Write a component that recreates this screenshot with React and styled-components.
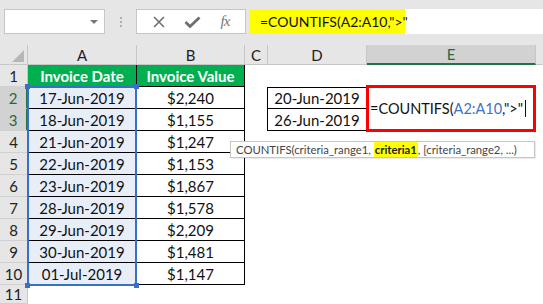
import styled, { createGlobalStyle, css } from "styled-components";

const GlobalStyle = createGlobalStyle`
  html, body {
    margin: 0;
    padding: 0;
    background: #fff;
  }
  body {
    font-family: Lato, "Liberation Sans", sans-serif;
  }
`;

const Page = styled.div`
  width: 543px;
  height: 304px;
  overflow: hidden;
  display: flex;
  flex-direction: column;
  background: #fff;
`;

const FormulaBar = styled.div`
  height: 45px;
  box-sizing: border-box;
  padding: 9px 0 0 4px;
  background: #e6e6e6;
  display: flex;
  align-items: flex-start;
`;

const NameBox = styled.div`
  width: 101px;
  height: 25px;
  box-sizing: border-box;
  background: #fff;
  border: 1px solid #c6c6c6;
  display: flex;
  align-items: center;
  justify-content: flex-end;
  padding-right: 6px;
`;

const DropArrow = styled.span`
  width: 0;
  height: 0;
  border-left: 4px solid transparent;
  border-right: 4px solid transparent;
  border-top: 4px solid #777;
`;

const Grip = styled.div`
  width: 31px;
  height: 25px;
  display: flex;
  flex-direction: column;
  align-items: center;
  justify-content: center;
  gap: 2px;
  span {
    width: 2px;
    height: 2px;
    background: #b0b0b0;
  }
`;

const ButtonBox = styled.div`
  width: 110px;
  height: 25px;
  box-sizing: border-box;
  background: #fff;
  border: 1px solid #c6c6c6;
  display: flex;
  align-items: center;
  justify-content: space-around;
  padding: 0 6px;
`;

const Fx = styled.span`
  font-family: "Liberation Serif", serif;
  font-style: italic;
  font-size: 15px;
  color: #777;
  letter-spacing: -1px;
`;

const FormulaInput = styled.div`
  flex: 1;
  height: 25px;
  margin-left: 3px;
  background: #fff;
  display: flex;
  align-items: center;
`;

const Highlight = styled.div`
  height: 25px;
  width: 156px;
  box-sizing: border-box;
  background: #ffff00;
  display: flex;
  align-items: center;
  padding-left: 11px;
  font-size: 14px;
  color: #111;
  white-space: nowrap;
`;

const Sheet = styled.div`
  position: relative;
  display: grid;
  grid-template-columns: 28px 109px 108px 23px 99px 169px 7px;
  grid-template-rows: 20px repeat(10, 22px) 19px;
  font-size: 15px;
  color: #111;
`;

const place = css`
  grid-column: ${(p) => p.$col};
  grid-row: ${(p) => p.$row};
`;

const Corner = styled.div`
  ${place}
  background: #e6e6e6;
  border-right: 1px solid #c6c6c6;
  border-bottom: 1px solid #c6c6c6;
  box-sizing: border-box;
  display: flex;
  align-items: flex-end;
  justify-content: flex-end;
  padding: 0 3px 2px 0;
  &::after {
    content: "";
    width: 0;
    height: 0;
    border-left: 12px solid transparent;
    border-bottom: 12px solid #b7b7b7;
  }
`;

const ColHeader = styled.div`
  ${place}
  box-sizing: border-box;
  background: ${(p) => (p.$selected ? "#d2d2d2" : "#e6e6e6")};
  color: ${(p) => (p.$selected ? "#1e6b41" : "#222")};
  border-right: 1px solid ${(p) => (p.$last ? "transparent" : "#c6c6c6")};
  border-bottom: ${(p) => (p.$selected ? "2px solid #217346" : "1px solid #c6c6c6")};
  display: flex;
  align-items: center;
  justify-content: center;
  font-size: 15px;
`;

const RowHeader = styled.div`
  ${place}
  box-sizing: border-box;
  background: ${(p) => (p.$selected ? "#d2d2d2" : "#e6e6e6")};
  color: ${(p) => (p.$selected ? "#1e6b41" : "#222")};
  border-right: ${(p) => (p.$selected ? "2px solid #217346" : "1px solid #c6c6c6")};
  border-bottom: 1px solid #d0d0d0;
  display: flex;
  align-items: center;
  justify-content: center;
  font-size: 15px;
`;

const Cell = styled.div`
  ${place}
  box-sizing: border-box;
  display: flex;
  align-items: center;
  justify-content: center;
  white-space: nowrap;
`;

const HeadCell = styled(Cell)`
  background: #00b050;
  color: #fff;
  font-weight: 700;
  border-right: 1px solid #000;
  border-bottom: 1px solid #000;
`;

const DataCell = styled(Cell)`
  background: ${(p) => (p.$picked ? "#e8eef8" : "#fff")};
  border-right: 1px solid #000;
  border-bottom: 1px solid #000;
`;

const BoxCell = styled(Cell)`
  border: 1px solid #000;
  border-top-width: ${(p) => (p.$first ? "1px" : "0")};
  margin-left: -1px;
`;

const FormulaCell = styled(Cell)`
  justify-content: flex-start;
  margin: -2px 0 -1px -1px;
  border: 3px solid #ff0000;
  padding-left: 1px;
  position: relative;
  z-index: 3;
  font-size: 14.5px;
`;

const Ref = styled.span`
  color: #3f72c4;
`;

const Caret = styled.span`
  display: inline-block;
  width: 1px;
  height: 17px;
  margin-left: 2px;
  background: #111;
`;

const RangeBox = styled.div`
  ${place}
  margin: -1px 0 -1px -1px;
  border: 2px solid #3a6fc8;
  position: relative;
  z-index: 2;
  pointer-events: none;
`;

const Handle = styled.span`
  position: absolute;
  width: 5px;
  height: 5px;
  background: #3a6fc8;
  top: ${(p) => (p.$bottom ? "auto" : "-4px")};
  bottom: ${(p) => (p.$bottom ? "-4px" : "auto")};
  left: ${(p) => (p.$right ? "auto" : "-4px")};
  right: ${(p) => (p.$right ? "-4px" : "auto")};
`;

const Tooltip = styled.div`
  position: absolute;
  left: 230px;
  top: 96px;
  width: 305px;
  height: 17px;
  box-sizing: border-box;
  background: #fff;
  border: 1px solid #c6c6c6;
  box-shadow: 1px 1px 1px rgba(0, 0, 0, 0.08);
  display: flex;
  align-items: stretch;
  padding-left: 5px;
  font-size: 11.3px;
  line-height: 15px;
  color: #444;
  white-space: nowrap;
  z-index: 4;
`;

const ArgMark = styled.b`
  background: #ffff00;
  color: #222;
  padding: 0 1px;
`;

const rows = [
  ["17-Jun-2019", "$2,240"],
  ["18-Jun-2019", "$1,155"],
  ["21-Jun-2019", "$1,247"],
  ["22-Jun-2019", "$1,153"],
  ["23-Jun-2019", "$1,867"],
  ["28-Jun-2019", "$1,578"],
  ["29-Jun-2019", "$2,209"],
  ["30-Jun-2019", "$1,481"],
  ["01-Jul-2019", "$1,147"],
];

const criteria = ["20-Jun-2019", "26-Jun-2019"];

const columns = ["A", "B", "C", "D", "E", ""];

const XIcon = () => (
  <svg width="12" height="12" viewBox="0 0 12 12">
    <path d="M1 1 L11 11 M11 1 L1 11" stroke="#6f6f6f" strokeWidth="1.6" fill="none" />
  </svg>
);

const CheckIcon = () => (
  <svg width="17" height="12" viewBox="0 0 17 12">
    <path d="M1.5 6 L6 10.5 L15.5 1.5" stroke="#6f6f6f" strokeWidth="2.8" fill="none" />
  </svg>
);

const App = () => {
  return (
    <>
      <GlobalStyle />
      <Page>
        <FormulaBar>
          <NameBox>
            <DropArrow />
          </NameBox>
          <Grip>
            <span />
            <span />
            <span />
          </Grip>
          <ButtonBox>
            <XIcon />
            <CheckIcon />
            <Fx>fx</Fx>
          </ButtonBox>
          <FormulaInput>
            <Highlight>=COUNTIFS(A2:A10,"&gt;"</Highlight>
          </FormulaInput>
        </FormulaBar>

        <Sheet>
          <Corner $col={1} $row={1} />
          {columns.map((c, i) => (
            <ColHeader key={i} $col={i + 2} $row={1} $selected={c === "E"} $last={c === ""}>
              {c}
            </ColHeader>
          ))}

          <RowHeader $col={1} $row={2}>1</RowHeader>
          <HeadCell $col={2} $row={2}>Invoice Date</HeadCell>
          <HeadCell $col={3} $row={2}>Invoice Value</HeadCell>

          {rows.map(([date, value], i) => {
            const n = i + 2;
            const r = n + 1;
            const crit = criteria[i];
            return [
              <RowHeader key={`h${n}`} $col={1} $row={r} $selected={n === 2 || n === 3}>
                {n}
              </RowHeader>,
              <DataCell key={`a${n}`} $col={2} $row={r} $picked>
                {date}
              </DataCell>,
              <DataCell key={`b${n}`} $col={3} $row={r}>
                {value}
              </DataCell>,
              crit && (
                <BoxCell key={`d${n}`} $col={5} $row={r} $first={i === 0}>
                  {crit}
                </BoxCell>
              ),
            ];
          })}

          <RowHeader $col={1} $row={12}>11</RowHeader>

          <FormulaCell $col={6} $row="3 / 5">
            =COUNTIFS(<Ref>A2:A10</Ref>,"&gt;"
            <Caret />
          </FormulaCell>

          <RangeBox $col={2} $row="3 / 12">
            <Handle />
            <Handle $right />
            <Handle $bottom />
            <Handle $bottom $right />
          </RangeBox>

          <Tooltip>
            COUNTIFS(criteria_range1,&nbsp;<ArgMark>criteria1</ArgMark>, [criteria_range2, ...)
          </Tooltip>
        </Sheet>
      </Page>
    </>
  );
};

export default App;
